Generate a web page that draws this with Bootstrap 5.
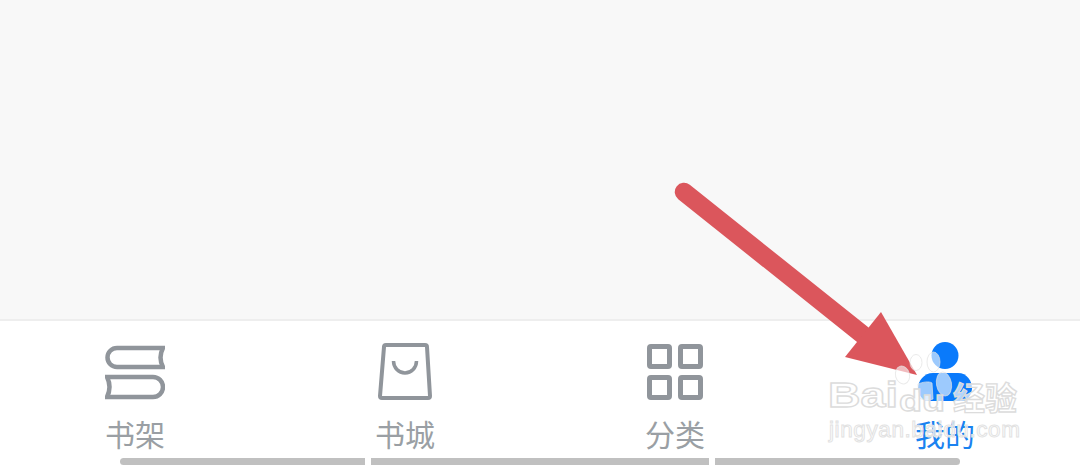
<!DOCTYPE html>
<html lang="en">
<head>
  <meta charset="UTF-8" />
  <title>书架</title>
  <link href="https://cdn.jsdelivr.net/npm/bootstrap@5.3.3/dist/css/bootstrap.min.css" rel="stylesheet">
  <style>
    html, body { height: 468px; overflow: hidden; }
    body { background: #fff; font-family: "Noto Sans CJK SC", "Liberation Sans", sans-serif; position: relative; }
    .shelf-area { height: 319px; background: #f8f8f8; border-bottom: 2px solid #eeeeee; box-sizing: content-box; }
    .tab-item { padding-top: 20px; color: #9a9fa4; }
    .tab-item svg { display: block; }
    .tab-item.is-active { color: #1a82f0; }
    .tab-label { font-size: 30px; font-weight: 400; line-height: 38px; margin-top: 13px; }
    .scroll-strip { padding-left: 120px; gap: 6px; margin-top: 6px; }
    .scroll-strip div { height: 7px; background: #c0c0c0; }
    .seg-a { width: 245px; border-radius: 4px 0 0 4px; }
    .seg-b { width: 338px; }
    .seg-c { width: 245px; border-radius: 0 4px 4px 0; }
    .overlay { position: absolute; left: 0; top: 0; pointer-events: none; }
    .wm-big { font-family: "Liberation Sans", sans-serif; font-weight: 700; font-size: 35px; }
    .wm-du { font-family: "Liberation Sans", sans-serif; font-weight: 700; font-size: 30px; }
    .wm-cn { font-family: "Noto Sans CJK SC", sans-serif; font-weight: 700; font-size: 32px; }
    .wm-url { font-family: "Liberation Sans", sans-serif; font-size: 22.5px; letter-spacing: .6px; }
    .wm-big, .wm-du, .wm-cn { fill: rgba(255,255,255,.7); stroke: #dcdcdc; stroke-width: 1.3px; }
    .wm-url { fill: rgba(255,255,255,.7); stroke: #e2e2e2; stroke-width: 1px; }
    .paw-toes { fill: rgba(255,255,255,.6); stroke: rgba(225,225,225,.7); stroke-width: 1px; }
  </style>
</head>
<body>

  <div class="shelf-area"></div>

  <div class="row g-0 text-center">
    <div class="col-3 tab-item d-flex flex-column align-items-center">
      <svg width="60" height="60" viewBox="105 340 60 60" fill="none" stroke="#90959b" stroke-width="4.5">
        <path d="M163 347H117a9.500 9.500 0 0 0 0 19H163q-5-9.500 0-19Z"/>
        <path d="M107 376H153a10 10 0 0 1 0 20H107q5-10 0-20Z"/>
      </svg>
      <div class="tab-label">书架</div>
    </div>
    <div class="col-3 tab-item d-flex flex-column align-items-center">
      <svg width="60" height="60" viewBox="375 340 60 60" fill="none" stroke="#90959b" stroke-width="4">
        <path d="M386 344H425a2 2 0 0 1 2 2L430 395a2 2 0 0 1-2 2H382a2 2 0 0 1-2-2L384 346a2 2 0 0 1 2-2Z"/>
        <path d="M393.500 360a11.500 12 0 0 0 23 0" stroke-width="3.500"/>
      </svg>
      <div class="tab-label">书城</div>
    </div>
    <div class="col-3 tab-item d-flex flex-column align-items-center">
      <svg width="60" height="60" viewBox="645 340 60 60" fill="none" stroke="#90959b" stroke-width="5">
        <rect x="649.500" y="345.500" width="20" height="20" rx="1.500"/>
        <rect x="680.500" y="345.500" width="20" height="20" rx="1.500"/>
        <rect x="649.500" y="376.500" width="20" height="20" rx="1.500"/>
        <rect x="680.500" y="376.500" width="20" height="20" rx="1.500"/>
      </svg>
      <div class="tab-label">分类</div>
    </div>
    <div class="col-3 tab-item is-active d-flex flex-column align-items-center">
      <svg width="60" height="60" viewBox="915 340 60 60" fill="#0a7afb">
        <circle cx="945" cy="354.500" r="13.500"/>
        <path d="M933 372H958C967 372 972 380 972 387C972 394 966 402 958 402H932C924 402 918 394 918 387C918 380 924 372 933 372Z"/>
      </svg>
      <div class="tab-label">我的</div>
    </div>
  </div>

  <div class="d-flex scroll-strip">
    <div class="seg-a"></div>
    <div class="seg-b"></div>
    <div class="seg-c"></div>
  </div>

  <!-- watermark and arrow sit over the tab bar -->
  <svg class="overlay" width="1080" height="468" viewBox="0 0 1080 468">
    <path d="M684 192L862.500 334.500" fill="none" stroke="#db565c" stroke-width="18.500" stroke-linecap="round"/>
    <path d="M881 312L917 375L845 357Z" fill="#db565c"/>
    <g class="paw-toes">
      <ellipse cx="902.500" cy="375" rx="7" ry="9" transform="rotate(-15 902.500 375)"/>
      <ellipse cx="916" cy="362.500" rx="6" ry="8"/>
      <ellipse cx="933.500" cy="362" rx="6.500" ry="10"/>
      <ellipse cx="944" cy="384" rx="7.500" ry="12" transform="rotate(-10 944 384)"/>
      <path d="M918 384c5-2 11-3 14-1l1 16c-5 2-10 2-14-2Z"/>
    </g>
    <text class="wm-big" x="828" y="407" textLength="70" lengthAdjust="spacingAndGlyphs">Bai</text>
    <text class="wm-du" x="899" y="411" textLength="46" lengthAdjust="spacingAndGlyphs">du</text>
    <text class="wm-cn" x="953" y="410">经验</text>
    <text class="wm-url" x="829" y="437">jingyan.baidu.com</text>
  </svg>

  <script src="https://cdn.jsdelivr.net/npm/bootstrap@5.3.3/dist/js/bootstrap.bundle.min.js"></script>
</body>
</html>
